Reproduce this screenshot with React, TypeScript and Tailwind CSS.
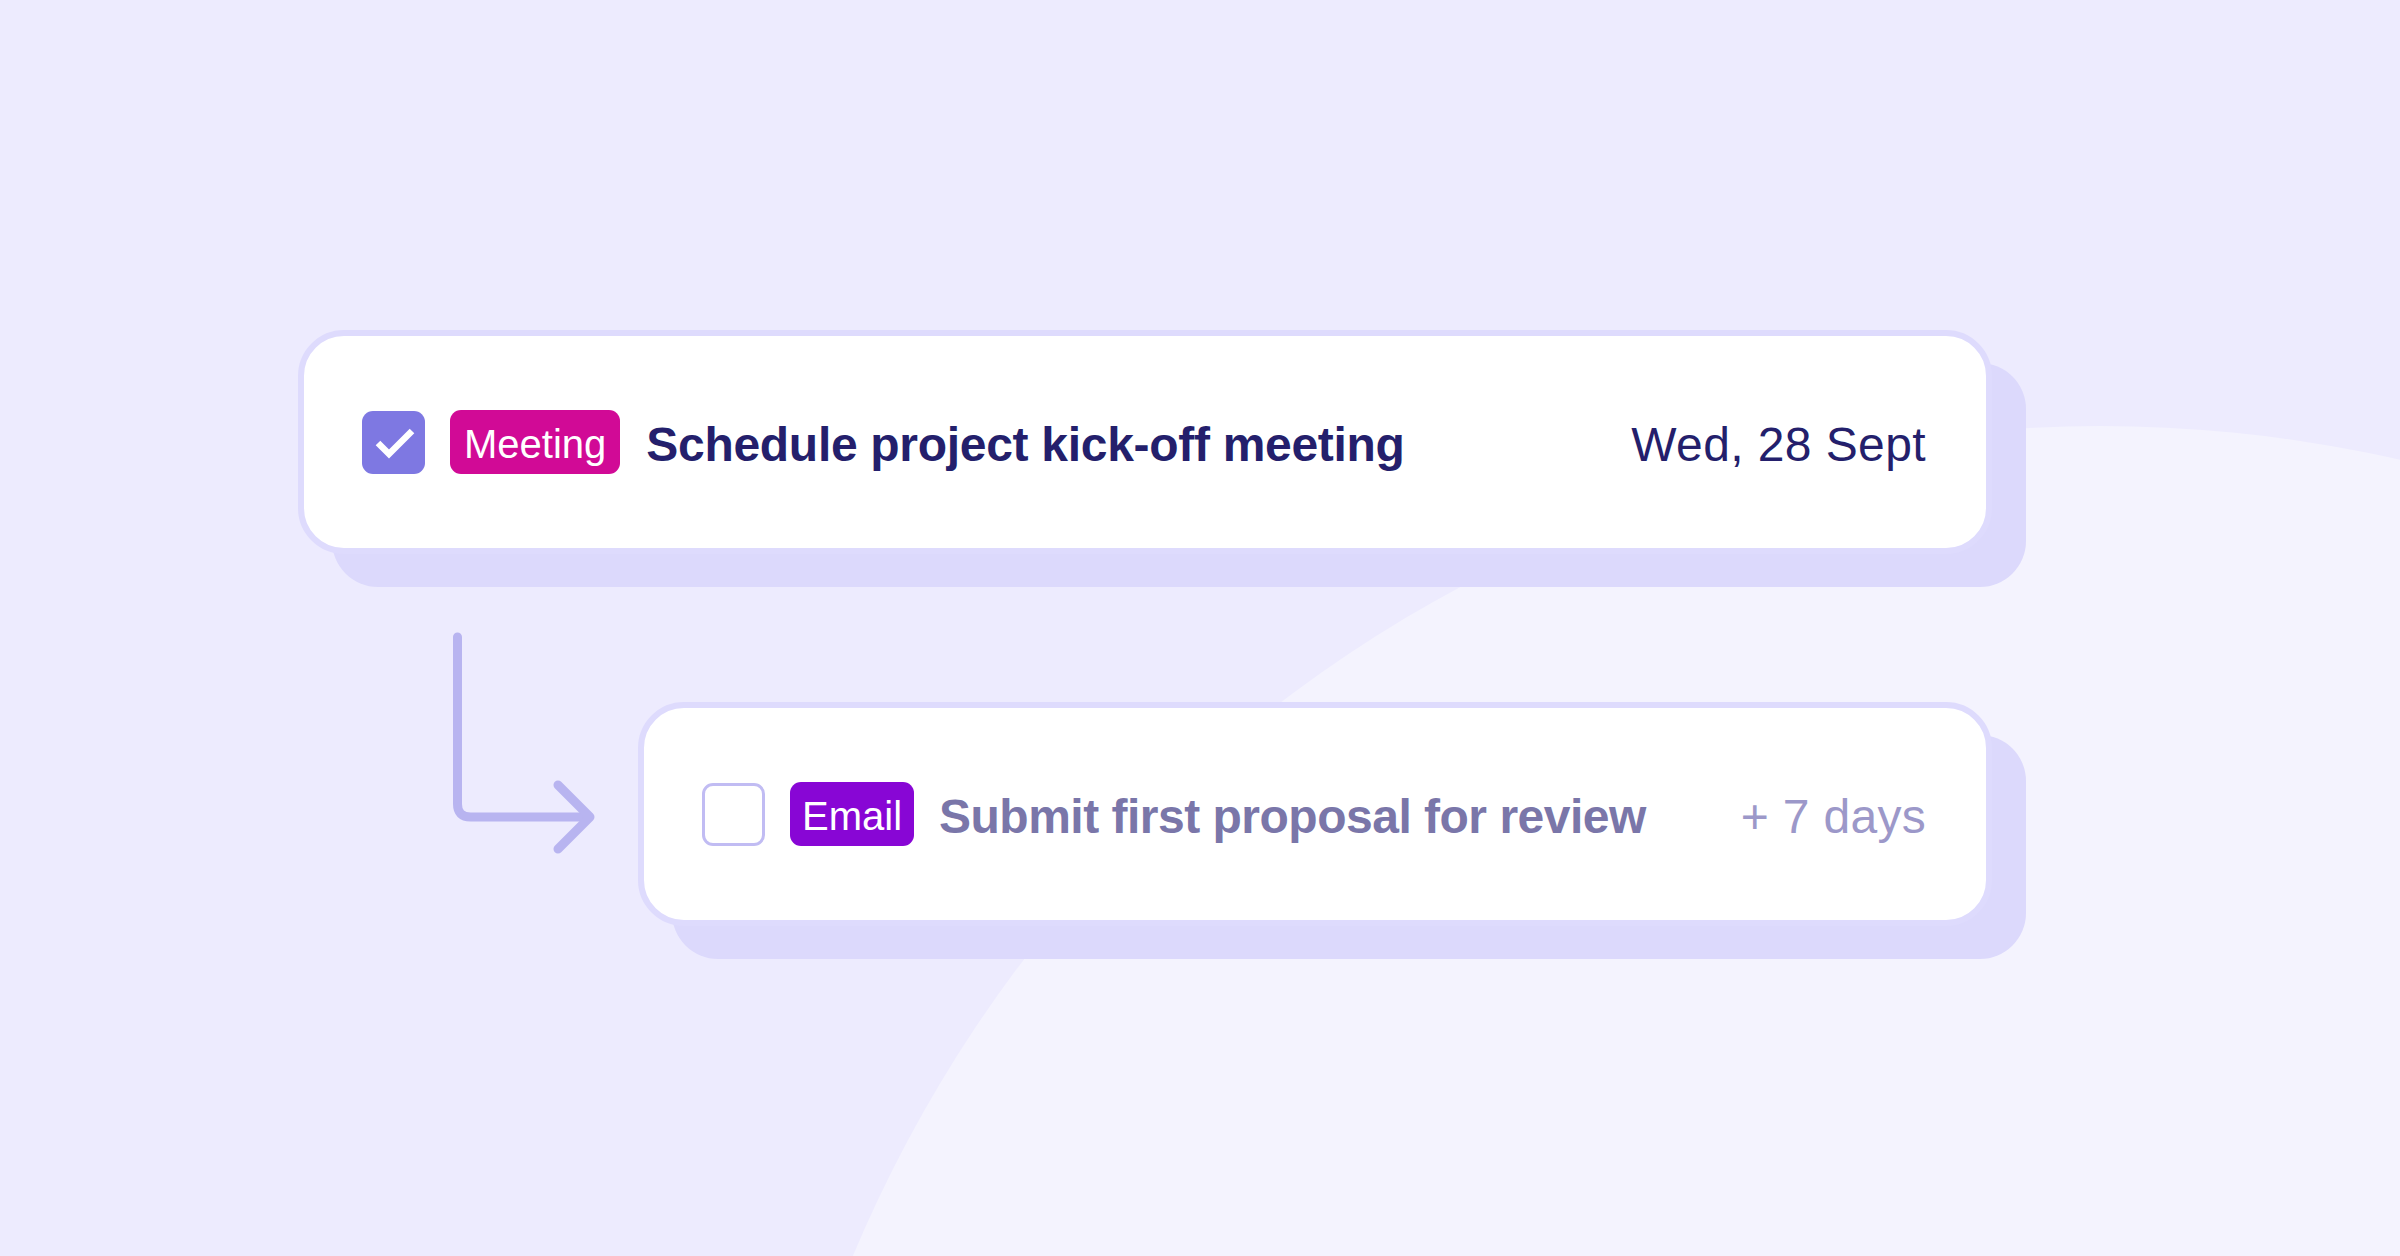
import React from 'react';

type Task = {
    tag: string;
    tagClass: string;
    title: string;
    titleClass: string;
    when: string;
    whenClass: string;
    done: boolean;
};

const CheckBox: React.FC<{ done: boolean }> = ({ done }) => {
    if (!done) {
        return <div className="w-[63px] h-[63px] shrink-0 rounded-[11px] border-[3px] border-[#c1bcf3] bg-white" />;
    }
    return (
        <div className="w-[63px] h-[63px] shrink-0 rounded-[11px] bg-[#7e78e2] flex items-center justify-center">
            <svg width="63" height="63" viewBox="0 0 63 63" fill="none">
                <path d="M16 32 L27 43 L50 20" stroke="#ffffff" strokeWidth="6.5" strokeLinejoin="miter" />
            </svg>
        </div>
    );
};

const TaskCard: React.FC<{ task: Task; className?: string }> = ({ task, className = '' }) => (
    <div
        className={`h-[224px] rounded-[46px] border-[6px] border-[#dedbfd] bg-white shadow-[34px_33px_0_0_#dcd9fc] flex items-center pl-[58px] pr-[60px] ${className}`}
    >
        <CheckBox done={task.done} />
        <span
            className={`ml-[25px] h-[64px] rounded-[11px] pt-[3px] flex items-center text-[40px] leading-none text-white ${task.tagClass}`}
        >
            {task.tag}
        </span>
        <span className={`pt-[6px] text-[48px] leading-none font-bold ${task.titleClass}`}>{task.title}</span>
        <span className={`ml-auto pt-[6px] text-[48px] leading-none ${task.whenClass}`}>{task.when}</span>
    </div>
);

const tasks: Task[] = [
    {
        tag: 'Meeting',
        tagClass: 'bg-[#d10a96] px-[14px]',
        title: 'Schedule project kick-off meeting',
        titleClass: 'ml-[26px] text-[#241f6c] tracking-[-0.3px]',
        when: 'Wed, 28 Sept',
        whenClass: 'text-[#241f6c] tracking-[0.4px]',
        done: true,
    },
    {
        tag: 'Email',
        tagClass: 'bg-[#8806d5] px-[12px]',
        title: 'Submit first proposal for review',
        titleClass: 'ml-[25px] text-[#7a76a9] tracking-[-0.5px]',
        when: '+ 7 days',
        whenClass: 'text-[#9c98c9] tracking-[0.3px]',
        done: false,
    },
];

export default function App() {
    return (
        <div className="relative w-[2400px] h-[1256px] overflow-hidden bg-[#edebfe] font-['Liberation_Sans',Arial,sans-serif]">
            {/* soft background circle */}
            <div className="absolute left-[748px] top-[426px] w-[2704px] h-[2704px] rounded-full bg-[#f4f3fe]" />

            <div className="relative flex flex-col pl-[298px] pt-[330px]">
                <TaskCard task={tasks[0]} className="w-[1694px]" />

                <div className="flex items-start mt-[66px]">
                    <svg className="ml-[142px] shrink-0" width="170" height="240" viewBox="0 0 170 240" fill="none">
                        <path
                            d="M17.5 17 V184 Q17.5 197 30.5 197 H148"
                            stroke="#b8b4f0"
                            strokeWidth="9"
                            strokeLinecap="round"
                            strokeLinejoin="round"
                        />
                        <path
                            d="M118 165 L150 197 L118 229"
                            stroke="#b8b4f0"
                            strokeWidth="9"
                            strokeLinecap="round"
                            strokeLinejoin="round"
                        />
                    </svg>
                    <TaskCard task={tasks[1]} className="ml-[28px] mt-[82px] w-[1354px]" />
                </div>
            </div>
        </div>
    );
}
